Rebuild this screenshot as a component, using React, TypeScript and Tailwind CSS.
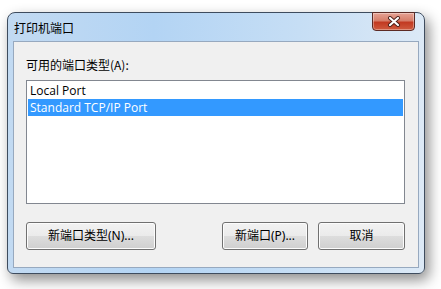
export default function App() {
  const font = "font-['Noto_Sans','Noto_Sans_CJK_SC',sans-serif]";
  const btn =
    'h-[28px] rounded-[3px] border border-[#707070] bg-[linear-gradient(#f2f2f2_0%,#ebebeb_50%,#dddddd_51%,#cfcfcf_100%)] shadow-[inset_0_0_0_1px_#fcfcfc] text-[12px] text-black flex items-center justify-center';

  return (
    <div className={`w-[441px] h-[289px] bg-white pt-[12px] pl-[7px] ${font}`}>
      <div className="w-[418px] h-[262px] flex flex-col rounded-t-[8px] rounded-b-[6px] border border-[#3e4c5e] bg-[linear-gradient(90deg,#c2daf2_0%,#b3d4f4_35%,#c6def5_70%,#dce9f6_100%)] shadow-[4px_6px_14px_rgba(0,0,0,0.45)]">
        {/* title bar */}
        <div className="h-[28px] flex items-start justify-between pl-[6px] pr-[9px]">
          <span className="self-center mt-[1px] text-[12px] text-black font-['Noto_Sans_CJK_SC',sans-serif]">
            打印机端口
          </span>
          <div className="w-[43px] h-[19px] -mt-[1px] rounded-b-[4px] border border-[#5c2a24] bg-[linear-gradient(#e6a294_0%,#d67e6a_45%,#c23a22_55%,#cf5b3f_100%)] shadow-[inset_0_0_0_1px_rgba(255,255,255,0.35)] flex items-center justify-center">
            <svg width="14" height="11" viewBox="0 0 14 11">
              <path d="M3 2 L11 9 M11 2 L3 9" stroke="#4a1e18" strokeWidth="4" strokeLinecap="round" />
              <path d="M3 2 L11 9 M11 2 L3 9" stroke="#ffffff" strokeWidth="2.2" strokeLinecap="round" />
            </svg>
          </div>
        </div>

        {/* client area */}
        <div className="mx-[5px] h-[227px] border border-[#97a9bf] bg-[#f0f0f0] pl-[12px] pr-[13px] pt-[15px] flex flex-col">
          <div className="h-[16px] leading-[16px] text-[12px] text-black font-['Noto_Sans_CJK_SC',sans-serif]">
            可用的端口类型(A):
          </div>
          <div className="mt-[7px] h-[124px] border border-[#828790] bg-white p-[1px] text-[12px] font-['Open_Sans',sans-serif]">
            <div className="h-[17px] leading-[17px] pl-[2px] text-black">Local Port</div>
            <div className="h-[17px] leading-[17px] pl-[2px] bg-[#3399ff] text-white">Standard TCP/IP Port</div>
          </div>
          <div className="mt-[18px] flex items-center">
            <button className={`${btn} w-[130px]`}>新端口类型(N)...</button>
            <button className={`${btn} ml-auto w-[86px] border-[#3c7fb1] shadow-[inset_0_0_0_1px_#48d2fb]`}>
              新端口(P)...
            </button>
            <button className={`${btn} ml-[10px] w-[87px]`}>取消</button>
          </div>
        </div>
      </div>
    </div>
  );
}
